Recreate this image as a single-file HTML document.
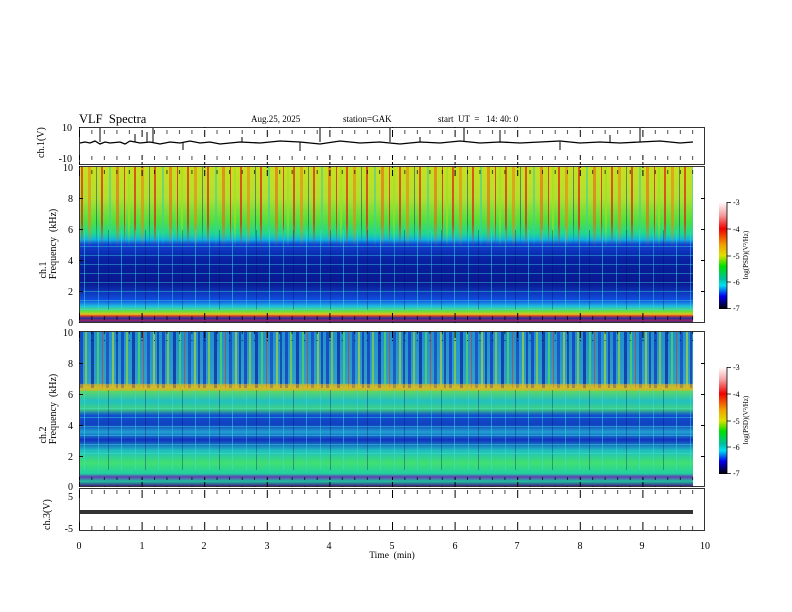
<!DOCTYPE html>
<html><head><meta charset="utf-8"><style>
html,body{margin:0;padding:0;background:#fff;width:792px;height:612px;overflow:hidden}
svg text{font-family:"Liberation Serif",serif;fill:#000;white-space:pre}
</style></head><body>
<svg width="792" height="612" viewBox="0 0 792 612" xmlns="http://www.w3.org/2000/svg">
<defs>
<linearGradient id="g1" x1="0" y1="0" x2="0" y2="1">
<stop offset="0" stop-color="#c8e020"/><stop offset="0.2" stop-color="#b0e030"/>
<stop offset="0.35" stop-color="#50e040"/><stop offset="0.43" stop-color="#20d890"/>
<stop offset="0.47" stop-color="#10b0e0"/><stop offset="0.5" stop-color="#1040d0"/>
<stop offset="0.6" stop-color="#0820a0"/><stop offset="0.75" stop-color="#0a1890"/>
<stop offset="0.86" stop-color="#1050e0"/><stop offset="0.9" stop-color="#20c0e0"/>
<stop offset="0.93" stop-color="#60e040"/><stop offset="0.95" stop-color="#e0c020"/>
<stop offset="0.96" stop-color="#e04020"/><stop offset="0.975" stop-color="#2030a0"/>
<stop offset="0.99" stop-color="#a02060"/><stop offset="1" stop-color="#303080"/>
</linearGradient>
<linearGradient id="g2" x1="0" y1="0" x2="0" y2="1">
<stop offset="0" stop-color="#2090d0"/><stop offset="0.33" stop-color="#30a0c8"/>
<stop offset="0.36" stop-color="#e0c020"/><stop offset="0.38" stop-color="#60d860"/>
<stop offset="0.45" stop-color="#20c0c0"/><stop offset="0.5" stop-color="#40d080"/>
<stop offset="0.54" stop-color="#1050d0"/><stop offset="0.6" stop-color="#1040c0"/>
<stop offset="0.65" stop-color="#20a0d0"/><stop offset="0.7" stop-color="#1030c0"/>
<stop offset="0.77" stop-color="#20c0c0"/><stop offset="0.85" stop-color="#40e070"/>
<stop offset="0.92" stop-color="#20d0a0"/><stop offset="0.94" stop-color="#6040b0"/>
<stop offset="0.97" stop-color="#20c0a0"/><stop offset="1" stop-color="#402080"/>
</linearGradient>
<linearGradient id="cb" x1="0" y1="0" x2="0" y2="1">
<stop offset="0" stop-color="#fff"/><stop offset="0.12" stop-color="#f4a0a0"/>
<stop offset="0.25" stop-color="#f00000"/><stop offset="0.4" stop-color="#f0a000"/>
<stop offset="0.5" stop-color="#e0e000"/><stop offset="0.6" stop-color="#00e000"/>
<stop offset="0.72" stop-color="#00c0a0"/><stop offset="0.78" stop-color="#00e0f0"/>
<stop offset="0.88" stop-color="#0000f0"/><stop offset="1" stop-color="#000"/>
</linearGradient>
<linearGradient id="fade" x1="0" y1="0" x2="0" y2="1">
<stop offset="0" stop-color="#fff"/><stop offset="0.7" stop-color="#fff"/><stop offset="1" stop-color="#000"/>
</linearGradient>
<mask id="m1"><rect x="0" y="167" width="792" height="80" fill="url(#fade)"/></mask>
<pattern id="s1" x="79" y="0" width="53" height="200" patternUnits="userSpaceOnUse">
<rect x="2" width="2" height="200" fill="#e02010" opacity=".7"/>
<rect x="9" width="3" height="200" fill="#f08010" opacity=".6"/>
<rect x="17" width="1" height="200" fill="#103080" opacity=".5"/>
<rect x="22" width="2" height="200" fill="#e02010" opacity=".7"/>
<rect x="30" width="2" height="200" fill="#40d0a0" opacity=".6"/>
<rect x="37" width="3" height="200" fill="#f06010" opacity=".6"/>
<rect x="45" width="1" height="200" fill="#e02010" opacity=".8"/>
<rect x="49" width="2" height="200" fill="#a0e020" opacity=".6"/>
</pattern>
<pattern id="s1b" x="79" y="0" width="37" height="200" patternUnits="userSpaceOnUse">
<rect x="5" width="1" height="200" fill="#40e0e0" opacity=".5"/>
<rect x="19" width="1" height="200" fill="#40e0e0" opacity=".4"/>
<rect x="29" width="1" height="200" fill="#000060" opacity=".3"/>
</pattern>
<pattern id="s2" x="79" y="0" width="41" height="200" patternUnits="userSpaceOnUse">
<rect x="1" width="3" height="200" fill="#1030c0" opacity=".7"/>
<rect x="6" width="2" height="200" fill="#a0e020" opacity=".6"/>
<rect x="12" width="3" height="200" fill="#0820a0" opacity=".7"/>
<rect x="18" width="2" height="200" fill="#50e050" opacity=".7"/>
<rect x="23" width="1" height="200" fill="#e03010" opacity=".6"/>
<rect x="27" width="3" height="200" fill="#1030c0" opacity=".6"/>
<rect x="33" width="2" height="200" fill="#c0e020" opacity=".6"/>
<rect x="37" width="2" height="200" fill="#0820a0" opacity=".6"/>
</pattern>
<pattern id="hl" x="0" y="0" width="10" height="9" patternUnits="userSpaceOnUse">
<rect y="3" width="10" height="1" fill="#40e0e0" opacity=".4"/>
</pattern>
<pattern id="tk" x="79" y="0" width="62.6" height="10" patternUnits="userSpaceOnUse">
<rect x="0" width="1" height="8" fill="#000"/>
<rect x="12.5" y="0" width="0.7" height="4" fill="#000"/>
<rect x="25" y="0" width="0.7" height="4" fill="#000"/>
<rect x="37.6" y="0" width="0.7" height="4" fill="#000"/>
<rect x="50" y="0" width="0.7" height="4" fill="#000"/>
</pattern>
<pattern id="tkb" x="79" y="0" width="62.6" height="10" patternUnits="userSpaceOnUse">
<rect x="0" y="2" width="1" height="8" fill="#000"/>
<rect x="12.5" y="6" width="0.7" height="4" fill="#000"/>
<rect x="25" y="6" width="0.7" height="4" fill="#000"/>
<rect x="37.6" y="6" width="0.7" height="4" fill="#000"/>
<rect x="50" y="6" width="0.7" height="4" fill="#000"/>
</pattern>
</defs>

<text x="79" y="123" font-size="12.5">VLF  Spectra</text>
<text x="251" y="122" font-size="9">Aug.25, 2025</text>
<text x="343" y="122" font-size="9">station=GAK</text>
<text x="438" y="122" font-size="9">start  UT  =   14: 40: 0</text>

<!-- ch1 panel -->
<rect x="79.5" y="127.5" width="625" height="37" fill="none" stroke="#000" stroke-width="0.8"/>
<rect x="79" y="127" width="626" height="10" fill="url(#tk)"/>
<rect x="79" y="155" width="626" height="10" fill="url(#tkb)"/>
<path d="M80 143 L85 142 L90 143 L95 141 L100 144 L105 142 L110 143 L120 142 L125 144 L130 141 L140 143 L150 142 L160 144 L170 142 L180 143 L190 141 L200 143 L210 142 L220 144 L240 142 L260 143 L280 141 L300 142 L320 144 L340 141 L360 143 L380 142 L400 144 L420 142 L440 143 L460 141 L480 143 L500 142 L520 143 L540 142 L560 141 L580 143 L600 142 L620 143 L640 142 L660 141 L680 143 L693 142" fill="none" stroke="#000" stroke-width="1.3"/>
<path d="M100 128V142M135 134V142M147 132V142M153 128V142M183 142V150M242 137V142M300 142V151M320 128V142M390 128V142M420 137V142M464 128V142M500 130V142M560 142V150M610 135V142M640 128V142" stroke="#000" stroke-width="1"/>
<text x="44" y="158" font-size="10" transform="rotate(-90 44 158)">ch.1(V)</text>
<text x="72" y="131" font-size="10" text-anchor="end">10</text>
<text x="72" y="162" font-size="10" text-anchor="end">-10</text>

<!-- spectrogram 1 -->
<rect x="80" y="167" width="613" height="155" fill="url(#g1)"/>
<rect x="80" y="167" width="613" height="80" fill="url(#s1)" mask="url(#m1)"/>
<rect x="80" y="230" width="613" height="80" fill="url(#s1b)"/>
<rect x="80" y="240" width="613" height="70" fill="url(#hl)"/>
<rect x="79.5" y="166.5" width="625" height="156" fill="none" stroke="#000" stroke-width="0.8"/>
<rect x="79" y="166" width="626" height="10" fill="url(#tk)"/>
<rect x="79" y="313" width="626" height="10" fill="url(#tkb)"/>
<path d="M79 198.5h4M79 229.5h4M79 260.5h4M79 291.5h4M701 198.5h4M701 229.5h4M701 260.5h4M701 291.5h4" stroke="#000"/>
<text x="73" y="171" font-size="10" text-anchor="end">10</text>
<text x="73" y="202" font-size="10" text-anchor="end">8</text>
<text x="73" y="233" font-size="10" text-anchor="end">6</text>
<text x="73" y="264" font-size="10" text-anchor="end">4</text>
<text x="73" y="295" font-size="10" text-anchor="end">2</text>
<text x="73" y="326" font-size="10" text-anchor="end">0</text>
<text x="46" y="270" font-size="10" transform="rotate(-90 46 270)" text-anchor="middle">ch.1</text>
<text x="56" y="244" font-size="10" transform="rotate(-90 56 244)" text-anchor="middle">Frequency  (kHz)</text>
<rect x="719" y="202" width="8" height="107" fill="url(#cb)"/>
<path d="M727 202.5h4M727 229h4M727 256h4M727 282h4M727 308.5h4M727 202v107" stroke="#000" stroke-width="0.8"/>
<text x="733" y="205" font-size="8">-3</text><text x="733" y="232" font-size="8">-4</text>
<text x="733" y="259" font-size="8">-5</text><text x="733" y="285" font-size="8">-6</text><text x="733" y="311" font-size="8">-7</text>
<text x="748" y="255" font-size="7" transform="rotate(-90 748 255)" text-anchor="middle">log(PSD)(V²/Hz)</text>

<!-- spectrogram 2 -->
<rect x="80" y="332" width="613" height="154" fill="url(#g2)"/>
<rect x="80" y="332" width="613" height="56" fill="url(#s2)"/>
<rect x="80" y="384" width="613" height="7" fill="#e0b020" opacity=".55"/>
<rect x="80" y="390" width="613" height="80" fill="url(#s1b)"/>
<rect x="80" y="400" width="613" height="60" fill="url(#hl)"/>
<rect x="79.5" y="331.5" width="625" height="155" fill="none" stroke="#000" stroke-width="0.8"/>
<rect x="79" y="331" width="626" height="10" fill="url(#tk)"/>
<rect x="79" y="477" width="626" height="10" fill="url(#tkb)"/>
<path d="M79 363.5h4M79 394.5h4M79 425.5h4M79 456.5h4M701 363.5h4M701 394.5h4M701 425.5h4M701 456.5h4" stroke="#000"/>
<text x="73" y="336" font-size="10" text-anchor="end">10</text>
<text x="73" y="367" font-size="10" text-anchor="end">8</text>
<text x="73" y="398" font-size="10" text-anchor="end">6</text>
<text x="73" y="429" font-size="10" text-anchor="end">4</text>
<text x="73" y="460" font-size="10" text-anchor="end">2</text>
<text x="73" y="490" font-size="10" text-anchor="end">0</text>
<text x="46" y="435" font-size="10" transform="rotate(-90 46 435)" text-anchor="middle">ch.2</text>
<text x="56" y="409" font-size="10" transform="rotate(-90 56 409)" text-anchor="middle">Frequency  (kHz)</text>
<rect x="719" y="367" width="8" height="107" fill="url(#cb)"/>
<path d="M727 367.5h4M727 394h4M727 421h4M727 447h4M727 473.5h4M727 367v107" stroke="#000" stroke-width="0.8"/>
<text x="733" y="370" font-size="8">-3</text><text x="733" y="397" font-size="8">-4</text>
<text x="733" y="424" font-size="8">-5</text><text x="733" y="450" font-size="8">-6</text><text x="733" y="476" font-size="8">-7</text>
<text x="748" y="420" font-size="7" transform="rotate(-90 748 420)" text-anchor="middle">log(PSD)(V²/Hz)</text>

<!-- ch3 -->
<rect x="79.5" y="488.5" width="625" height="42" fill="none" stroke="#000" stroke-width="0.8"/>
<rect x="79" y="488" width="626" height="10" fill="url(#tk)"/>
<rect x="79" y="521" width="626" height="10" fill="url(#tkb)"/>
<rect x="80" y="510" width="613" height="4" fill="#333"/>
<text x="73" y="500" font-size="10" text-anchor="end">5</text>
<text x="73" y="532" font-size="10" text-anchor="end">-5</text>
<text x="50" y="530" font-size="10" transform="rotate(-90 50 530)">ch.3(V)</text>

<g font-size="10" text-anchor="middle">
<text x="79" y="549">0</text><text x="142" y="549">1</text><text x="204" y="549">2</text>
<text x="267" y="549">3</text><text x="329" y="549">4</text><text x="392" y="549">5</text>
<text x="455" y="549">6</text><text x="517" y="549">7</text><text x="580" y="549">8</text>
<text x="642" y="549">9</text><text x="705" y="549">10</text>
<text x="392" y="558" font-size="9.5">Time  (min)</text>
</g>
</svg>
</body></html>
